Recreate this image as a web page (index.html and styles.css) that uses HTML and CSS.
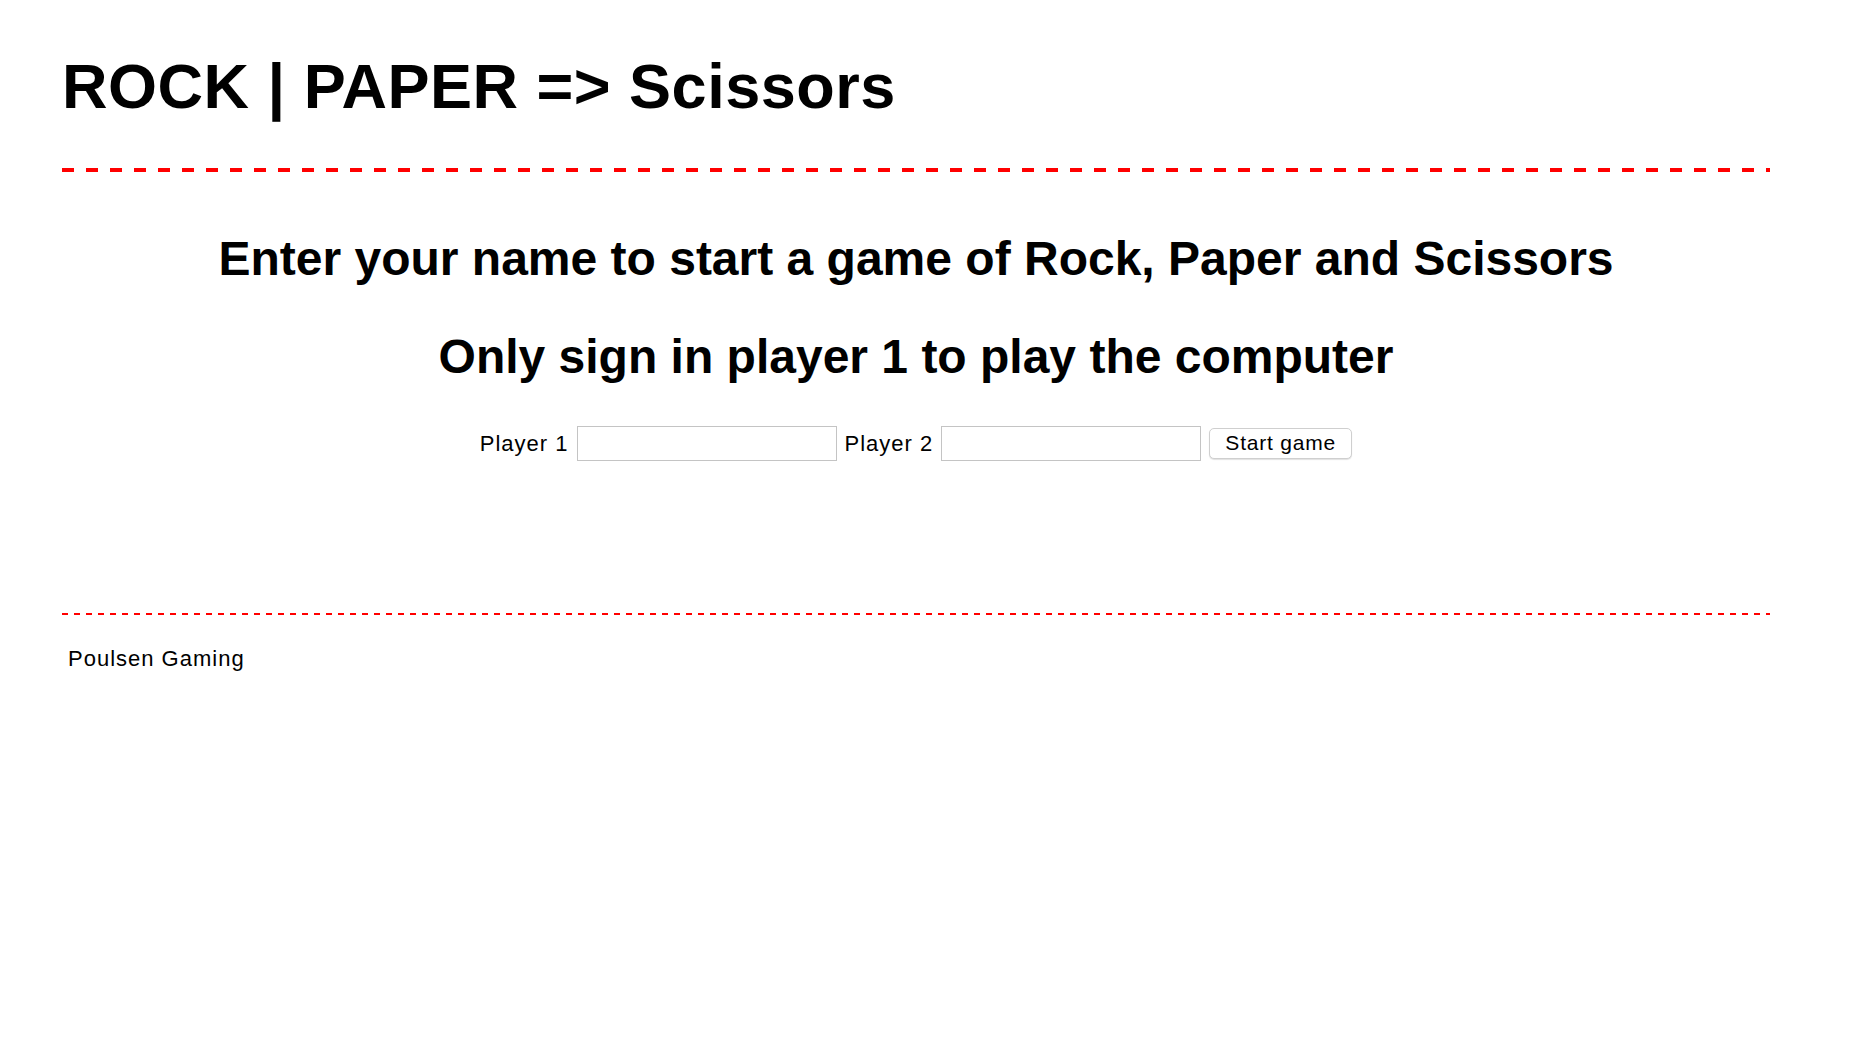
FILE: index.html
```html
<!DOCTYPE html>
<html lang="en">
<head>
<meta charset="utf-8">
<title>Rock Paper Scissors</title>
<link rel="stylesheet" href="styles.css">
</head>
<body>
<div class="page">
  <header class="site-header">
    <h1 class="title">ROCK | PAPER =&gt; Scissors</h1>
  </header>
  <hr class="rule rule-top">
  <main class="intro">
    <h2 class="heading heading-first">Enter your name to start a game of Rock, Paper and Scissors</h2>
    <h2 class="heading heading-second">Only sign in player 1 to play the computer</h2>
    <form class="signin" action="#">
      <label class="field-label" for="p1">Player 1</label>
      <input class="field" id="p1" type="text">
      <label class="field-label" for="p2">Player 2</label>
      <input class="field" id="p2" type="text">
      <button class="start" type="button">Start game</button>
    </form>
  </main>
  <hr class="rule rule-bottom">
  <footer class="site-footer">
    <p class="credit">Poulsen Gaming</p>
  </footer>
</div>
</body>
</html>
```
FILE: styles.css
```css
html, body {
  margin: 0;
  padding: 0;
  background: #ffffff;
}

body {
  font-family: "Liberation Sans", Arial, Helvetica, sans-serif;
  color: #000000;
}

.page {
  margin-left: 62px;
  width: 1708px;
}

.site-header {
  padding-top: 50px;
}

.title {
  margin: 0;
  font-size: 63px;
  line-height: 1.15;
  font-weight: bold;
  letter-spacing: 0.5px;
}

.rule {
  margin: 0;
  border: none;
}

.rule-top {
  margin-top: 46px;
  height: 4px;
  background: repeating-linear-gradient(to right, #ff0000 0 12px, transparent 12px 24px);
}

.rule-bottom {
  margin-top: 152px;
  height: 2px;
  background: repeating-linear-gradient(to right, #ff0000 0 6px, transparent 6px 12px);
}

.intro {
  display: flex;
  flex-direction: column;
  align-items: center;
}

.heading {
  margin: 0;
  font-size: 48px;
  line-height: 1.15;
  font-weight: bold;
  text-align: center;
}

.heading-first {
  margin-top: 59px;
}

.heading-second {
  margin-top: 42px;
}

.signin {
  margin-top: 42px;
  display: flex;
  align-items: center;
  gap: 8px;
}

.field-label {
  font-size: 22px;
  line-height: 1.15;
  letter-spacing: 1px;
}

.field {
  box-sizing: border-box;
  width: 260px;
  height: 35px;
  margin: 0;
  padding: 2px 6px;
  border: 1px solid #c4c4c4;
  border-radius: 0;
  background: #ffffff;
  font: 20px "Liberation Sans", Arial, sans-serif;
}

.start {
  box-sizing: border-box;
  width: 143px;
  height: 31px;
  margin: 0;
  padding: 0;
  border: 1px solid #cfcfcf;
  border-radius: 5px;
  background: #ffffff;
  box-shadow: 0 1px 1px rgba(0, 0, 0, 0.12);
  font: 21px "Liberation Sans", Arial, sans-serif;
  letter-spacing: 0.8px;
  color: #000000;
}

.credit {
  margin: 31px 0 0 0;
  padding-left: 6px;
  font-size: 22px;
  line-height: 1.15;
  letter-spacing: 1px;
}
```
